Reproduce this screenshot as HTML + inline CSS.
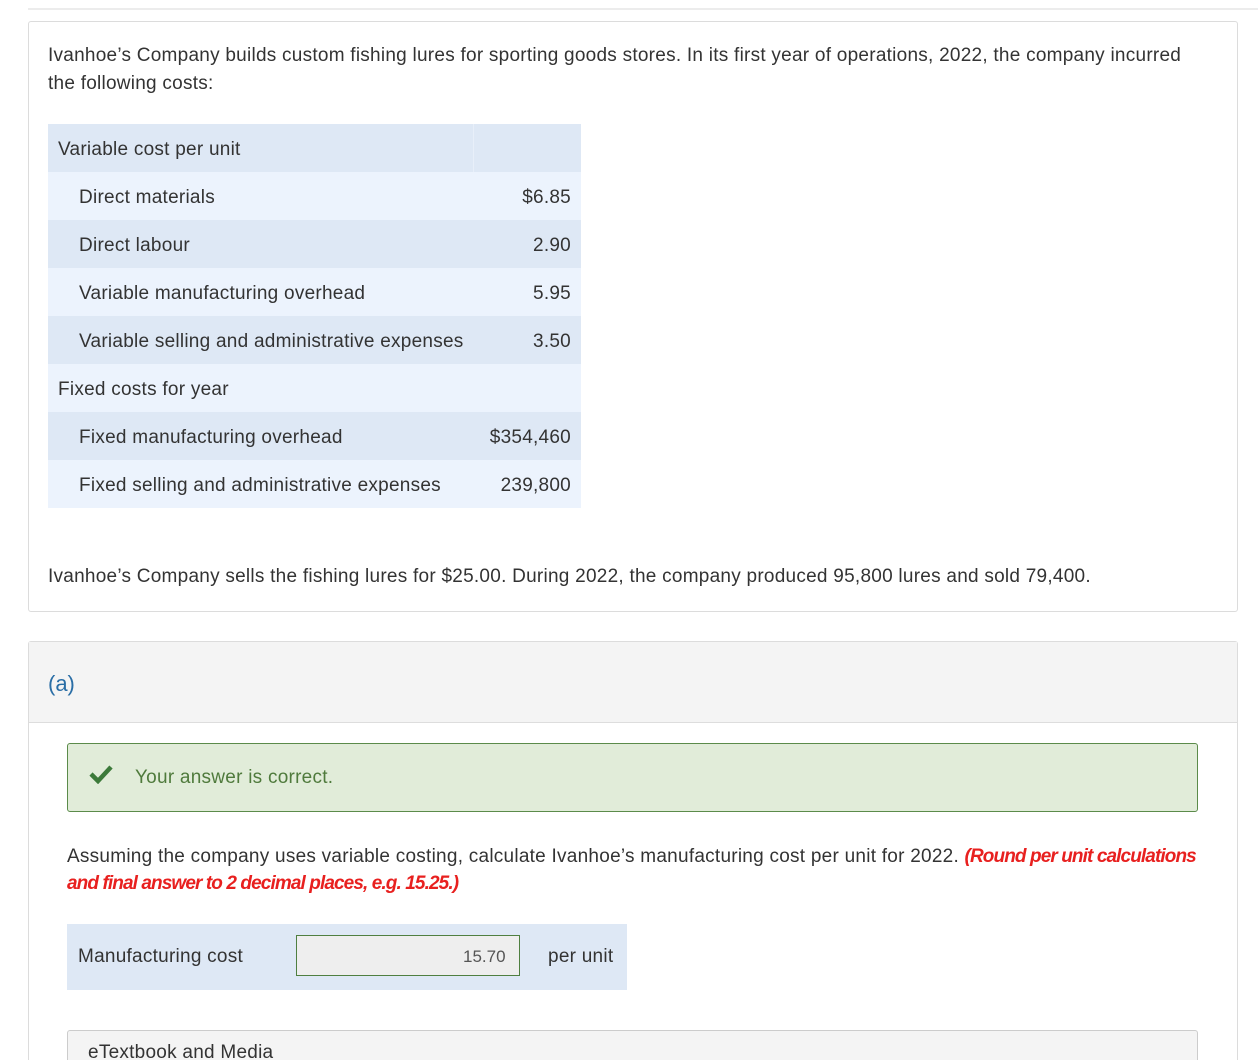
<!DOCTYPE html>
<html style="overflow:hidden;height:1060px"><head><style>
body{margin:0;width:1258px;height:1060px;overflow:hidden;background:#fff;font-family:"Liberation Sans",sans-serif;color:#333;position:relative}
.a{position:absolute}
.t{font-size:19px;letter-spacing:0.25px}
.row{position:absolute;left:48px;width:533px;height:48px;font-size:19px;letter-spacing:0.25px}
.row span{position:absolute;top:15px}
.row .v{right:10px}
.d{background:#dee8f5}.l{background:#ecf3fd}
</style></head><body>
<div class="a" style="left:28px;top:8px;width:1230px;height:2px;background:#ececec"></div>
<div class="a" style="left:28px;top:21px;width:1208px;height:589px;border:1px solid #dcdcdc;border-radius:3px"></div>
<div class="a t" style="left:48px;top:42px;width:1150px;line-height:28px">Ivanhoe’s Company builds custom fishing lures for sporting goods stores. In its first year of operations, 2022, the company incurred the following costs:</div>
<div class="row d" style="top:124px"><span style="left:10px">Variable cost per unit</span></div>
<div class="row l" style="top:172px"><span style="left:31px">Direct materials</span><span class="v">$6.85</span></div>
<div class="row d" style="top:220px"><span style="left:31px">Direct labour</span><span class="v">2.90</span></div>
<div class="row l" style="top:268px"><span style="left:31px">Variable manufacturing overhead</span><span class="v">5.95</span></div>
<div class="row d" style="top:316px"><span style="left:31px">Variable selling and administrative expenses</span><span class="v">3.50</span></div>
<div class="row l" style="top:364px"><span style="left:10px">Fixed costs for year</span></div>
<div class="row d" style="top:412px"><span style="left:31px">Fixed manufacturing overhead</span><span class="v">$354,460</span></div>
<div class="row l" style="top:460px"><span style="left:31px">Fixed selling and administrative expenses</span><span class="v">239,800</span></div>
<div class="a" style="left:473px;top:124px;width:1px;height:48px;background:#e8eff9"></div>
<div class="a t" style="left:48px;top:566px">Ivanhoe’s Company sells the fishing lures for $25.00. During 2022, the company produced 95,800 lures and sold 79,400.</div>
<div class="a" style="left:28px;top:641px;width:1208px;height:430px;border:1px solid #dcdcdc;border-radius:3px"></div>
<div class="a" style="left:29px;top:642px;width:1208px;height:80px;background:#f4f4f4;border-bottom:1px solid #ddd"></div>
<div class="a" style="left:48px;top:671px;font-size:22px;color:#2a6ea6">(a)</div>
<div class="a" style="left:67px;top:743px;width:1129px;height:67px;background:#e1ecd9;border:1.5px solid #5b8b4a;border-radius:3px"></div>
<svg class="a" style="left:88px;top:764px" width="26" height="20" viewBox="0 0 26 20"><path d="M3 10 L10 17 L23 3" fill="none" stroke="#3c7a3a" stroke-width="4.5"/></svg>
<div class="a t" style="left:135px;top:767px;color:#4f7a3c">Your answer is correct.</div>
<div class="a t" style="left:67px;top:843px;width:1140px;line-height:27px">Assuming the company uses variable costing, calculate Ivanhoe’s manufacturing cost per unit for 2022. <b style="color:#e8201f;font-style:italic;letter-spacing:-0.9px">(Round per unit calculations and final answer to 2 decimal places, e.g. 15.25.)</b></div>
<div class="a d" style="left:67px;top:924px;width:560px;height:66px"></div>
<div class="a t" style="left:78px;top:946px">Manufacturing cost</div>
<div class="a" style="left:296px;top:935px;width:222px;height:39px;background:#eee;border:1.5px solid #4f7f40"></div>
<div class="a" style="left:463px;top:947px;font-size:17px;color:#555">15.70</div>
<div class="a t" style="left:548px;top:946px">per unit</div>
<div class="a" style="left:67px;top:1030px;width:1129px;height:60px;background:#f4f4f4;border:1px solid #ccc;border-radius:3px"></div>
<div class="a t" style="left:88px;top:1042px">eTextbook and Media</div>
</body></html>
